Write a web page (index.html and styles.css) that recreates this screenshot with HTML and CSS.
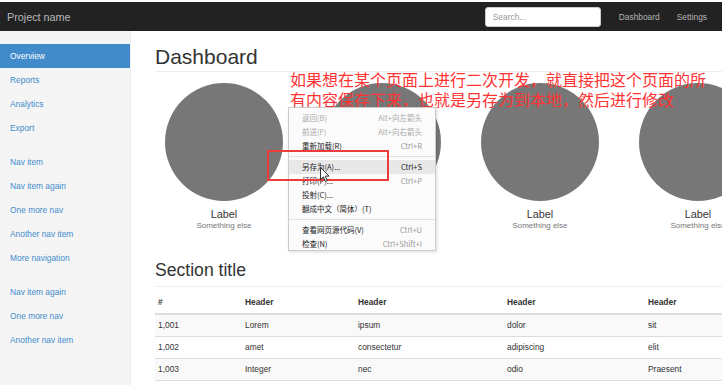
FILE: index.html
```html
<!DOCTYPE html>
<html lang="zh-CN">
<head>
    <meta charset="UTF-8">
    <meta name="viewport" content="width=device-width, initial-scale=1.0">
    <title>Dashboard</title>
    <link rel="stylesheet" href="styles.css">
</head>
<body>
    <div class="navbar">
        <span class="brand">Project name</span>
        <div class="nav-right">
            <input class="search" type="text" placeholder="Search...">
            <a class="nav-link">Dashboard</a>
            <a class="nav-link">Settings</a>
        </div>
    </div>

    <div class="layout">
        <div class="sidebar">
            <ul class="side-nav">
                <li class="active">Overview</li>
                <li>Reports</li>
                <li>Analytics</li>
                <li>Export</li>
            </ul>
            <ul class="side-nav">
                <li>Nav item</li>
                <li>Nav item again</li>
                <li>One more nav</li>
                <li>Another nav item</li>
                <li>More navigation</li>
            </ul>
            <ul class="side-nav">
                <li>Nav item again</li>
                <li>One more nav</li>
                <li>Another nav item</li>
            </ul>
        </div>

        <div class="main">
            <h1 class="page-header">Dashboard</h1>

            <div class="placeholders">
                <div class="placeholder">
                    <div class="circle"></div>
                    <h4>Label</h4>
                    <span class="muted">Something else</span>
                </div>
                <div class="placeholder">
                    <div class="circle"></div>
                    <h4>Label</h4>
                    <span class="muted">Something else</span>
                </div>
                <div class="placeholder">
                    <div class="circle"></div>
                    <h4>Label</h4>
                    <span class="muted">Something else</span>
                </div>
                <div class="placeholder">
                    <div class="circle"></div>
                    <h4>Label</h4>
                    <span class="muted">Something else</span>
                </div>
            </div>

            <h2 class="sub-header">Section title</h2>
            <table class="table">
                <thead>
                    <tr><th class="c1">#</th><th class="c2">Header</th><th class="c3">Header</th><th class="c4">Header</th><th>Header</th></tr>
                </thead>
                <tbody>
                    <tr><td>1,001</td><td>Lorem</td><td>ipsum</td><td>dolor</td><td>sit</td></tr>
                    <tr><td>1,002</td><td>amet</td><td>consectetur</td><td>adipiscing</td><td>elit</td></tr>
                    <tr><td>1,003</td><td>Integer</td><td>nec</td><td>odio</td><td>Praesent</td></tr>
                </tbody>
            </table>
        </div>
    </div>

    <!-- 截图上的标注 -->
    <div class="note">如果想在某个页面上进行二次开发，就直接把这个页面的所<br>有内容保存下来，也就是另存为到本地，然后进行修改</div>

    <div class="context-menu">
        <div class="item disabled"><span>返回(B)</span><span>Alt+向左箭头</span></div>
        <div class="item disabled"><span>前进(F)</span><span>Alt+向右箭头</span></div>
        <div class="item"><span>重新加载(R)</span><span class="key">Ctrl+R</span></div>
        <div class="sep"></div>
        <div class="item hover"><span>另存为(A)...</span><span class="key dark">Ctrl+S</span></div>
        <div class="item"><span>打印(P)...</span><span class="key">Ctrl+P</span></div>
        <div class="item"><span>投射(C)...</span></div>
        <div class="item"><span>翻成中文（简体）(T)</span></div>
        <div class="sep"></div>
        <div class="item"><span>查看网页源代码(V)</span><span class="key">Ctrl+U</span></div>
        <div class="item"><span>检查(N)</span><span class="key">Ctrl+Shift+I</span></div>
    </div>

    <div class="mark"></div>

    <svg class="cursor" width="10" height="16" viewBox="0 0 10 16">
        <path d="M0.5 0.5 L0.5 12.5 L3.4 9.8 L5.3 14.2 L7.2 13.4 L5.3 9.1 L9 9.1 Z" fill="#fff" stroke="#333" stroke-width="1"/>
    </svg>
</body>
</html>
```

FILE: styles.css
```css
body {
    margin: 0;
    padding-top: 2px;
    width: 722px;
    height: 385px;
    overflow: hidden;
    background: #fff;
    font-family: "Liberation Sans", Arial, sans-serif;
    font-size: 8.4px;
    color: #333;
    position: relative;
}
.navbar {
    height: 29px;
    background: #222;
    display: flex;
    align-items: center;
    justify-content: space-between;
}
.brand {
    padding-left: 7px;
    font-size: 10.8px;
    color: #b8b8b8;
}
.nav-right {
    display: flex;
    align-items: center;
    padding-right: 15px;
}
.search {
    width: 116px;
    height: 20px;
    box-sizing: border-box;
    border: 1px solid #ccc;
    border-radius: 3px;
    padding: 0 7px;
    font-family: "Liberation Sans", Arial, sans-serif;
    font-size: 8.4px;
    margin-right: 18px;
}
.search::placeholder {
    color: #999;
}
.nav-link {
    color: #b5b5b5;
    margin-right: 17px;
}
.nav-link:last-child {
    margin-right: 0;
}
.layout {
    display: flex;
    height: 354px;
}
.sidebar {
    width: 130px;
    flex-shrink: 0;
    background: #f5f5f5;
    border-right: 1px solid #eee;
    padding-top: 13px;
}
.side-nav {
    list-style: none;
    margin: 0 0 10px;
    padding: 0;
}
.side-nav li {
    height: 24px;
    line-height: 24px;
    padding-left: 10px;
    color: #428bca;
}
.side-nav li.active {
    background: #428bca;
    color: #fff;
}
.main {
    flex: 1;
    min-width: 0;
    overflow: hidden;
    padding: 13px 0 0 24px;
}
.page-header {
    margin: 0;
    font-size: 21px;
    font-weight: normal;
    line-height: 25px;
    padding-bottom: 2px;
    border-bottom: 1px solid #eee;
    width: 700px;
}
.placeholders {
    display: flex;
    margin: 11px 0 0 -10px;
}
.placeholder {
    width: 158px;
    flex-shrink: 0;
    display: flex;
    flex-direction: column;
    align-items: center;
}
.circle {
    width: 118px;
    height: 118px;
    border-radius: 50%;
    background: #777;
}
.placeholder h4 {
    margin: 7px 0 0;
    font-size: 10.8px;
    font-weight: normal;
    line-height: 12px;
}
.muted {
    font-size: 8px;
    line-height: 12px;
    color: #777;
}
.sub-header {
    margin: 29px 0 0;
    font-size: 17.6px;
    font-weight: normal;
    line-height: 19px;
    padding-bottom: 6px;
    border-bottom: 1px solid #eee;
    width: 700px;
}
.table {
    margin-top: 4px;
    border-collapse: collapse;
    width: 640px;
}
.table th,
.table td {
    text-align: left;
    padding: 5px 3px;
    line-height: 11px;
}
.table th {
    line-height: 12px;
    border-bottom: 2px solid #ddd;
}
.table td {
    border-bottom: 1px solid #ddd;
}
.table tbody tr:nth-child(odd) {
    background: #f9f9f9;
}
.c1 { width: 81px; }
.c2 { width: 107px; }
.c3 { width: 143px; }
.c4 { width: 135px; }

.note {
    position: absolute;
    left: 290px;
    top: 69px;
    font-family: "Noto Sans CJK SC", sans-serif;
    font-size: 16px;
    line-height: 20px;
    color: #f33;
    white-space: nowrap;
}
.context-menu {
    position: absolute;
    left: 288px;
    top: 107px;
    width: 148px;
    height: 144px;
    box-sizing: border-box;
    padding-top: 3px;
    background: #fbfbfb;
    border: 1px solid #ccc;
    box-shadow: 1px 1px 3px rgba(0, 0, 0, 0.15);
    font-family: "Noto Sans CJK SC", sans-serif;
    font-size: 7.5px;
    color: #222;
}
.item {
    height: 14px;
    line-height: 14px;
    display: flex;
    justify-content: space-between;
    padding: 0 13px 0 13px;
}
.item.disabled {
    color: #aaa;
}
.item.hover {
    background: #e8e8e8;
}
.key {
    color: #999;
}
.key.dark {
    color: #222;
}
.sep {
    height: 1px;
    background: #e2e2e2;
    margin: 3px 0;
}
.mark {
    position: absolute;
    left: 267px;
    top: 150px;
    width: 122px;
    height: 31px;
    box-sizing: border-box;
    border: 2px solid #ee3b3b;
}
.cursor {
    position: absolute;
    left: 320px;
    top: 167px;
}
```
